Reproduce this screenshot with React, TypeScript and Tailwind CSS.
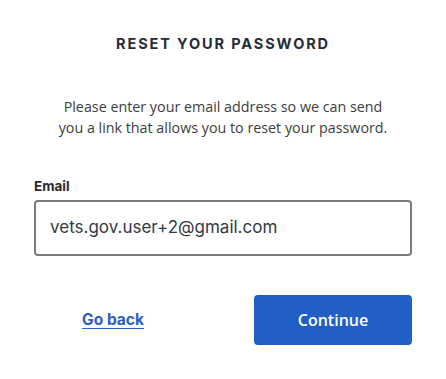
import React from "react";

export default function App() {
  return (
    <div className="w-[446px] h-[379px] bg-white px-[34px] pt-[34px] font-['Inter',sans-serif]">
      <h1 className="text-center text-[14.5px] leading-[20px] font-bold tracking-[0.13em] text-[#252c38]">
        RESET YOUR PASSWORD
      </h1>
      <p className="mt-[42px] text-center font-['Open_Sans',sans-serif] text-[14.3px] leading-[21px] text-[#3d3d3d]">
        Please enter your email address so we can send
        <br />
        you a link that allows you to reset your password.
      </p>
      <label className="mt-[39px] block text-[13.5px] leading-[18px] font-bold text-[#2b2b2b]">
        Email
      </label>
      <div className="mt-[5px] h-[56px] rounded-[4px] border-2 border-[#7a7a7a] pl-[14px] flex items-center text-[17px] text-[#333a45]">
        vets.gov.user+2@gmail.com
      </div>
      <div className="mt-[39px] grid grid-cols-2 gap-[62px]">
        <div className="h-[50px] flex items-center justify-center">
          <a href="#" className="text-[15.5px] font-bold text-[#2a5ec4] underline underline-offset-[3px]">
            Go back
          </a>
        </div>
        <button className="h-[50px] rounded-[4px] bg-[#215fc4] text-white font-['Open_Sans',sans-serif] font-semibold text-[16px]">
          Continue
        </button>
      </div>
    </div>
  );
}
